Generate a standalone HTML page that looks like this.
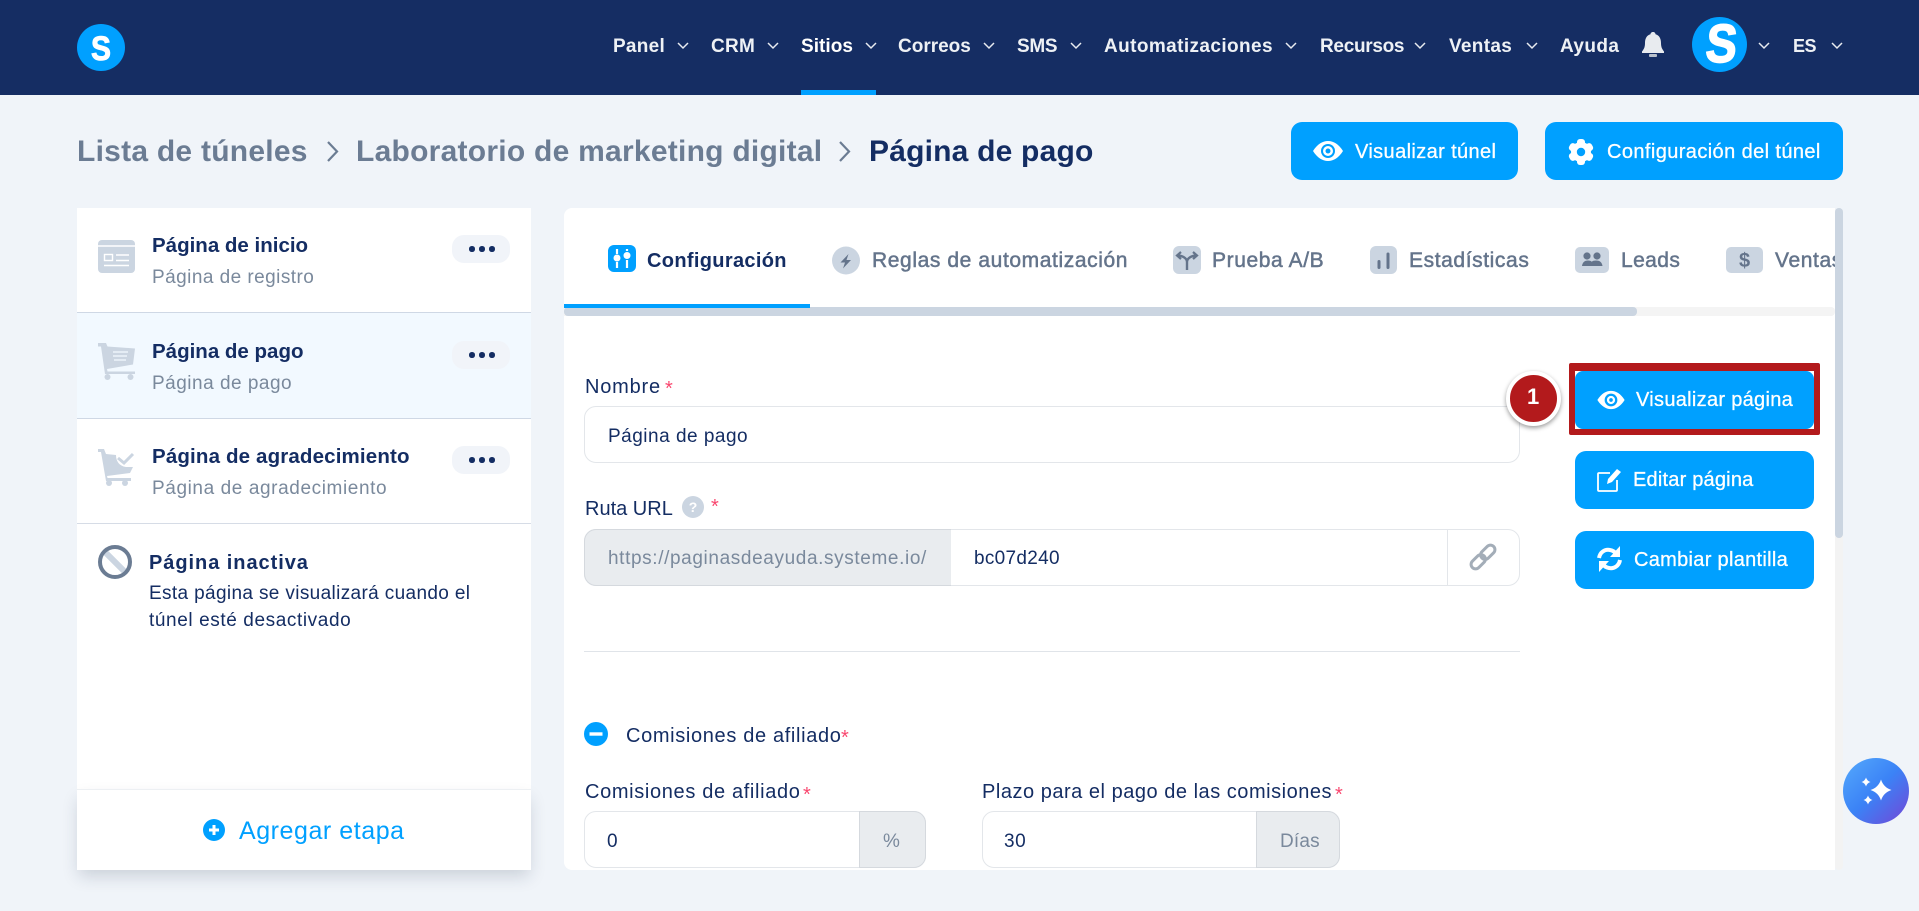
<!DOCTYPE html>
<html lang="es">
<head>
<meta charset="utf-8">
<title>Página de pago</title>
<style>
html,body{margin:0;padding:0}
body{position:relative;width:1919px;height:911px;overflow:hidden;background:#f0f4f9;font-family:"Liberation Sans",Arial,sans-serif;color:#142d63}
.a,.t,svg{position:absolute}
svg{display:block;overflow:visible}
.t{white-space:nowrap;line-height:0;font-size:19px;letter-spacing:.5px}
.b{font-weight:700}
.nav{font-size:19px;font-weight:700;letter-spacing:.3px;color:#eef1f5}
.crumb{font-size:30px;font-weight:700;color:#6b7c93}
.btn{position:absolute;background:#00a0ff;border-radius:11px}
.wt{color:#fff;font-size:20px;letter-spacing:.38px;-webkit-text-stroke:.3px #fff}
.tab{font-size:21px;letter-spacing:.6px;color:#64748b;-webkit-text-stroke:.5px #64748b}
.ttl{font-size:20.5px;font-weight:700;letter-spacing:0}
.sub{color:#7a899c}
.menu{position:absolute;left:452px;width:58px;height:28px;background:#f1f4f9;border-radius:12px}
.menu i{position:absolute;top:11px;width:5.5px;height:5.5px;border-radius:50%;background:#142d63}
.lab{font-size:20px;letter-spacing:.65px}
.req{color:#f9476f;font-size:20px;letter-spacing:0}
.inp{position:absolute;box-sizing:border-box;background:#fff;border:1px solid #e3e6ea;border-radius:12px}
.add{position:absolute;box-sizing:border-box;background:#e9ecef;border:1px solid #d5d9de}
</style>
</head>
<body>

<header class="a" style="left:0;top:0;width:1919px;height:95px;background:#152d63"></header>
<div class="a" style="left:801px;top:90px;width:75px;height:5px;background:#00a0ff"></div>

<div class="a" style="left:77px;top:24px;width:48px;height:47px;border-radius:50%;background:#00a0ff"></div>
<svg style="left:77px;top:24px" width="48" height="47"><text transform="translate(24 36) scale(.88 1)" text-anchor="middle" font-family="Liberation Sans" font-weight="700" font-size="34" fill="#fff" stroke="#fff" stroke-width="1">S</text></svg>

<span class="t nav" style="left:613px;top:47px;letter-spacing:.26px">Panel</span>
<span class="t nav" style="left:711px;top:47px">CRM</span>
<span class="t nav" style="left:801px;top:47px;color:#fff;letter-spacing:.05px">Sitios</span>
<span class="t nav" style="left:898px;top:47px;letter-spacing:0">Correos</span>
<span class="t nav" style="left:1017px;top:47px;letter-spacing:-.3px">SMS</span>
<span class="t nav" style="left:1104px;top:47px;letter-spacing:.4px">Automatizaciones</span>
<span class="t nav" style="left:1320px;top:47px;letter-spacing:-.3px">Recursos</span>
<span class="t nav" style="left:1449px;top:47px;letter-spacing:.3px">Ventas</span>
<span class="t nav" style="left:1560px;top:47px;letter-spacing:.4px">Ayuda</span>
<span class="t nav" style="left:1793px;top:46px;font-size:18px;letter-spacing:-.5px">ES</span>

<svg width="0" height="0" style="left:0;top:0"><defs>
<polyline id="ch" points="1,1 6,6 11,1" fill="none" stroke="#e8ebf0" stroke-width="1.5"/>
<path id="st" d="M0-1Q.24-.24 1 0Q.24 .24 0 1Q-.24 .24-1 0Q-.24-.24 0-1z" fill="#fff"/>
</defs></svg>
<svg style="left:677px;top:42px" width="12" height="8"><use href="#ch"/></svg>
<svg style="left:767px;top:42px" width="12" height="8"><use href="#ch"/></svg>
<svg style="left:865px;top:42px" width="12" height="8"><use href="#ch"/></svg>
<svg style="left:983px;top:42px" width="12" height="8"><use href="#ch"/></svg>
<svg style="left:1070px;top:42px" width="12" height="8"><use href="#ch"/></svg>
<svg style="left:1285px;top:42px" width="12" height="8"><use href="#ch"/></svg>
<svg style="left:1414px;top:42px" width="12" height="8"><use href="#ch"/></svg>
<svg style="left:1526px;top:42px" width="12" height="8"><use href="#ch"/></svg>
<svg style="left:1758px;top:42px" width="12" height="8"><use href="#ch"/></svg>
<svg style="left:1831px;top:42px" width="12" height="8"><use href="#ch"/></svg>

<svg style="left:1642px;top:32px" width="22" height="25" viewBox="0 0 22 25">
<path d="M11 0c1.500 0 2.500 1 2.500 2.300C17.500 3.300 19 7 19 11c0 4 1 6 3 8.500V21H0v-1.500c2-2.500 3-4.500 3-8.500 0-4 1.500-7.700 5.500-8.700C8.500 1 9.500 0 11 0z" fill="#e8ebef"/>
<rect x="7" y="22" width="8" height="3" rx="1" fill="#b9c0cb"/></svg>

<div class="a" style="left:1692px;top:17px;width:55px;height:55px;border-radius:50%;background:#00a0ff"></div>
<svg style="left:1692px;top:17px" width="55" height="55"><text transform="translate(28 45) scale(.86 1) skewX(-6)" text-anchor="middle" font-family="Liberation Sans" font-weight="700" font-size="54" fill="#fff" stroke="#fff" stroke-width="1.600">S</text></svg>

<span class="t crumb" style="left:77px;top:152px;letter-spacing:.25px">Lista de túneles</span>
<svg style="left:326px;top:140px" width="13" height="23"><polyline points="2,2 11,11.500 2,21" fill="none" stroke="#6b7c93" stroke-width="2.200"/></svg>
<span class="t crumb" style="left:356px;top:152px;letter-spacing:.25px">Laboratorio de marketing digital</span>
<svg style="left:838px;top:140px" width="13" height="23"><polyline points="2,2 11,11.500 2,21" fill="none" stroke="#6b7c93" stroke-width="2.200"/></svg>
<span class="t crumb" style="left:869px;top:152px;color:#142d63;letter-spacing:.2px">Página de pago</span>

<div class="btn" style="left:1291px;top:122px;width:227px;height:58px"></div>
<svg style="left:1313px;top:140px" width="30" height="22" viewBox="0 0 30 22"><path d="M0 11C4.500 4 9.500 1 15 1s10.500 3 15 10c-4.500 7-9.500 10-15 10S4.500 18 0 11z" fill="#fff"/><circle cx="15" cy="11" r="7" fill="#00a0ff"/><circle cx="15" cy="11" r="5" fill="#fff"/><circle cx="15" cy="11" r="2.500" fill="#00a0ff"/></svg>
<span class="t wt" style="left:1355px;top:152px">Visualizar túnel</span>

<div class="btn" style="left:1545px;top:122px;width:298px;height:58px"></div>
<svg style="left:1567px;top:139px" width="28" height="26" viewBox="-14 -13 28 26">
<g fill="#fff"><circle r="10"/><rect x="-4" y="-13" width="8" height="26" rx="3"/><rect x="-4" y="-13" width="8" height="26" rx="3" transform="rotate(60)"/><rect x="-4" y="-13" width="8" height="26" rx="3" transform="rotate(120)"/></g><circle r="4.200" fill="#00a0ff"/></svg>
<span class="t wt" style="left:1607px;top:152px;letter-spacing:.4px">Configuración del túnel</span>

<!-- Sidebar -->
<aside class="a" style="left:77px;top:208px;width:454px;height:662px;background:#fff"></aside>
<div class="a" style="left:77px;top:313px;width:454px;height:105px;background:#f2f9ff"></div>
<div class="a" style="left:77px;top:312px;width:454px;height:1px;background:#cfd8e5"></div>
<div class="a" style="left:77px;top:418px;width:454px;height:1px;background:#cfd8e5"></div>
<div class="a" style="left:77px;top:523px;width:454px;height:1px;background:#d6dce6"></div>

<svg style="left:98px;top:240px" width="37" height="33" viewBox="0 0 37 33"><rect width="37" height="33" rx="4" fill="#cbd5e1"/><path d="M0 6h37" stroke="#fff" stroke-width="1.400"/><rect x="6.500" y="14.500" width="8" height="6" fill="none" stroke="#fff" stroke-width="1.400"/><path d="M18 15h13M18 20.500h13M6 25.500h25" stroke="#fff" stroke-width="1.600"/></svg>
<span class="t ttl" style="left:152px;top:246px">Página de inicio</span>
<span class="t sub" style="left:152px;top:278px;letter-spacing:.45px">Página de registro</span>
<div class="menu" style="top:235px"><i style="left:17px"></i><i style="left:27px"></i><i style="left:37px"></i></div>

<svg style="left:98px;top:343px" width="37" height="37" viewBox="0 0 37 37"><path d="M0 0h8l1.500 3.500L37 5.500l-2 16-26 4.500.5 2.500H37V31H7L3 3.500H0z" fill="#cbd5e1"/><path d="M15 9h15M15 13h14M16 17h12" stroke="#f2f9ff" stroke-width="1.300"/><circle cx="9.500" cy="34" r="3" fill="#cbd5e1"/><circle cx="32.500" cy="34" r="3" fill="#cbd5e1"/></svg>
<span class="t ttl" style="left:152px;top:352px">Página de pago</span>
<span class="t sub" style="left:152px;top:384px">Página de pago</span>
<div class="menu" style="top:341px"><i style="left:17px"></i><i style="left:27px"></i><i style="left:37px"></i></div>

<svg style="left:98px;top:449px" width="36" height="37" viewBox="0 0 36 37"><path d="M0 0h6l2 5 10 1c0 6 3 11 10 12h7l-3 6-23 3 .5 2H33v3H8L3 3H0z" fill="#cbd5e1"/><path d="M20 9l6 5 9-9" fill="none" stroke="#cbd5e1" stroke-width="3"/><circle cx="11" cy="34" r="3" fill="#cbd5e1"/><circle cx="27" cy="34" r="3" fill="#cbd5e1"/></svg>
<span class="t ttl" style="left:152px;top:457px;letter-spacing:.15px">Página de agradecimiento</span>
<span class="t sub" style="left:152px;top:489px;letter-spacing:.6px">Página de agradecimiento</span>
<div class="menu" style="top:446px"><i style="left:17px"></i><i style="left:27px"></i><i style="left:37px"></i></div>

<svg style="left:98px;top:545px" width="34" height="34" viewBox="0 0 34 34"><path d="M7 7l20 20" stroke="#cbd5e1" stroke-width="6"/><circle cx="17" cy="17" r="15" fill="none" stroke="#6b7c93" stroke-width="4"/></svg>
<span class="t ttl" style="left:149px;top:563px;font-size:20px;letter-spacing:.95px">Página inactiva</span>
<span class="t" style="left:149px;top:594px;letter-spacing:.36px">Esta página se visualizará cuando el</span>
<span class="t" style="left:149px;top:621px;letter-spacing:.6px">túnel esté desactivado</span>

<div class="a" style="left:77px;top:789px;width:454px;height:81px;background:#fff;border-top:1px solid #edf0f3;box-sizing:border-box;box-shadow:0 8px 16px -2px rgba(30,45,70,.18)"></div>
<svg style="left:203px;top:819px" width="22" height="22"><circle cx="11" cy="11" r="11" fill="#00a0ff"/><path d="M11 6v10M6 11h10" stroke="#fff" stroke-width="3"/></svg>
<span class="t" style="left:239px;top:831px;font-size:25px;letter-spacing:.55px;color:#00a0ff">Agregar etapa</span>

<!-- Main panel -->
<main class="a" style="left:564px;top:208px;width:1271px;height:662px;background:#fff;border-radius:8px 0 0 8px"></main>
<div class="a" style="left:1835px;top:208px;width:8px;height:662px;background:#f3f3f3;border-radius:4px"></div>
<div class="a" style="left:1835px;top:208px;width:8px;height:330px;background:#cbd5e1;border-radius:4px"></div>

<div class="a" style="left:0;top:0;width:1835px;height:911px;overflow:hidden">
<svg style="left:608px;top:245px" width="28" height="27" viewBox="0 0 28 27"><rect width="28" height="27" rx="6" fill="#00a0ff"/><path d="M9 4v5M9 17v6M19 4v2M19 15v8" stroke="#fff" stroke-width="2.200"/><circle cx="9" cy="13" r="3.500" fill="#fff"/><circle cx="19" cy="10.500" r="3.500" fill="#fff"/></svg>
<span class="t b" style="left:647px;top:261px;font-size:20px;letter-spacing:.33px">Configuración</span>

<svg style="left:832px;top:246px" width="28" height="29" viewBox="0 0 28 29"><circle cx="14" cy="14.500" r="14" fill="#cbd5e1"/><path d="M16.500 8l-8 8.500h4.500l-2 6 8-8.500h-4.500z" fill="#64748b"/></svg>
<span class="t tab" style="left:872px;top:261px">Reglas de automatización</span>

<svg style="left:1173px;top:246px" width="28" height="28" viewBox="0 0 28 28"><rect width="28" height="28" rx="6" fill="#cbd5e1"/><path d="M14 24v-8c0-3-3-6-9-6.500M14 16c0-3 3-6 9-6.500" fill="none" stroke="#64748b" stroke-width="2.400"/><path d="M8 6L4 9.500l4 3.500M20 6l4 3.500-4 3.500" fill="none" stroke="#64748b" stroke-width="2.200"/></svg>
<span class="t tab" style="left:1212px;top:261px;letter-spacing:.6px">Prueba A/B</span>

<svg style="left:1370px;top:246px" width="27" height="28" viewBox="0 0 27 28"><rect width="27" height="28" rx="6" fill="#cbd5e1"/><path d="M9 15.500v6M18 8v13.500" stroke="#64748b" stroke-width="3" stroke-linecap="round"/></svg>
<span class="t tab" style="left:1409px;top:261px;letter-spacing:.6px">Estadísticas</span>

<svg style="left:1575px;top:247px" width="34" height="26" viewBox="0 0 34 26"><rect width="34" height="26" rx="5" fill="#cbd5e1"/><circle cx="12" cy="9" r="3.600" fill="#64748b"/><circle cx="22" cy="9" r="3.600" fill="#64748b"/><path d="M7 19c.5-4 3-5.500 6-5.500 1.500 0 2.800.4 3.800 1.200C17.800 13.900 19 13.500 21 13.500c3.500 0 6 1.500 6.500 5.500z" fill="#64748b"/></svg>
<span class="t tab" style="left:1621px;top:261px;letter-spacing:.4px">Leads</span>

<svg style="left:1726px;top:247px" width="37" height="26" viewBox="0 0 37 26"><rect width="37" height="26" rx="5" fill="#cbd5e1"/><text x="18.500" y="20" text-anchor="middle" font-family="Liberation Sans" font-size="20" font-weight="700" fill="#64748b">$</text></svg>
<span class="t tab" style="left:1775px;top:261px">Ventas</span>
</div>

<div class="a" style="left:564px;top:307px;width:1271px;height:9px;background:#f4f4f4;border-radius:0 4px 4px 0"></div>
<div class="a" style="left:564px;top:307px;width:1073px;height:9px;background:#cbd5e1;border-radius:4px"></div>
<div class="a" style="left:564px;top:304px;width:246px;height:4px;background:#00a0ff"></div>

<!-- Form -->
<span class="t lab" style="left:585px;top:387px;letter-spacing:.8px">Nombre</span>
<span class="t req" style="left:665px;top:389px">*</span>
<div class="inp" style="left:584px;top:406px;width:936px;height:57px"></div>
<span class="t" style="left:608px;top:437px">Página de pago</span>

<span class="t lab" style="left:585px;top:509px;letter-spacing:0">Ruta URL</span>
<svg style="left:682px;top:496px" width="22" height="22"><circle cx="11" cy="11" r="11" fill="#cbd5e1"/><text x="11" y="16" text-anchor="middle" font-family="Liberation Sans" font-weight="700" font-size="14" fill="#fff">?</text></svg>
<span class="t req" style="left:711px;top:507px">*</span>
<div class="inp" style="left:584px;top:529px;width:936px;height:57px"></div>
<div class="add" style="left:584px;top:529px;width:367px;height:57px;border-radius:12px 0 0 12px;border-right:0"></div>
<div class="a" style="left:1447px;top:530px;width:1px;height:55px;background:#e3e6ea"></div>
<span class="t sub" style="left:608px;top:559px;letter-spacing:.62px">https://paginasdeayuda.systeme.io/</span>
<span class="t" style="left:974px;top:559px;letter-spacing:.3px">bc07d240</span>
<svg style="left:1469px;top:543px" width="28" height="28" viewBox="0 0 28 28"><g fill="none" stroke="#a3adb8" stroke-width="3" transform="rotate(-45 14 14)"><rect x="-1" y="9.500" width="16.500" height="9" rx="4.500"/><rect x="12.500" y="9.500" width="16.500" height="9" rx="4.500"/></g></svg>

<div class="a" style="left:584px;top:651px;width:936px;height:1px;background:#e0e4e9"></div>

<svg style="left:584px;top:722px" width="24" height="24"><circle cx="12" cy="12" r="12" fill="#00a0ff"/><rect x="5.500" y="10.300" width="13" height="3.400" fill="#fff"/></svg>
<span class="t lab" style="left:626px;top:736px">Comisiones de afiliado</span>
<span class="t req" style="left:841px;top:738px">*</span>

<span class="t lab" style="left:585px;top:792px">Comisiones de afiliado</span>
<span class="t req" style="left:803px;top:795px">*</span>
<div class="inp" style="left:584px;top:811px;width:342px;height:57px"></div>
<div class="add" style="left:859px;top:811px;width:67px;height:57px;border-radius:0 12px 12px 0"></div>
<span class="t" style="left:607px;top:842px">0</span>
<span class="t sub" style="left:883px;top:842px;letter-spacing:0">%</span>

<span class="t lab" style="left:982px;top:792px;letter-spacing:.52px">Plazo para el pago de las comisiones</span>
<span class="t req" style="left:1335px;top:795px">*</span>
<div class="inp" style="left:982px;top:811px;width:358px;height:57px"></div>
<div class="add" style="left:1256px;top:811px;width:84px;height:57px;border-radius:0 12px 12px 0"></div>
<span class="t" style="left:1004px;top:842px">30</span>
<span class="t sub" style="left:1280px;top:842px;letter-spacing:.2px">Días</span>

<!-- Right-side actions -->
<div class="a" style="left:1569px;top:363px;width:251px;height:72px;box-sizing:border-box;background:#fff;border:solid #b31a1c;border-width:8px 6px 6px 6px;border-radius:2px"></div>
<div class="btn" style="left:1575px;top:371px;width:239px;height:58px;border-radius:8px"></div>
<svg style="left:1597px;top:390px" width="28" height="20" viewBox="0 0 30 22"><path d="M0 11C4.500 4 9.500 1 15 1s10.500 3 15 10c-4.500 7-9.500 10-15 10S4.500 18 0 11z" fill="#fff"/><circle cx="15" cy="11" r="7" fill="#00a0ff"/><circle cx="15" cy="11" r="4.500" fill="#fff"/><circle cx="15" cy="11" r="2" fill="#00a0ff"/></svg>
<span class="t wt" style="left:1636px;top:400px;letter-spacing:.3px">Visualizar página</span>

<div class="a" style="left:1506px;top:371px;width:55px;height:55px;box-sizing:border-box;border-radius:50%;background:#b31a1c;border:4px solid #fff;box-shadow:0 2px 5px rgba(0,0,0,.4)"></div>
<span class="t b" style="left:1527px;top:397px;font-size:22px;letter-spacing:0;color:#fff">1</span>

<div class="btn" style="left:1575px;top:451px;width:239px;height:58px"></div>
<svg style="left:1597px;top:468px" width="25" height="24" viewBox="0 0 25 24"><path d="M13 5H2a1 1 0 0 0-1 1v16a1 1 0 0 0 1 1h17a1 1 0 0 0 1-1V12" fill="none" stroke="#fff" stroke-width="1.800"/><path d="M10 16l1-5L20 1l4 3-9 10z" fill="#fff"/></svg>
<span class="t wt" style="left:1633px;top:480px;letter-spacing:.2px">Editar página</span>

<div class="btn" style="left:1575px;top:531px;width:239px;height:58px"></div>
<svg style="left:1597px;top:546px" width="25" height="26" viewBox="0 0 25 26"><path d="M2 12C3 6 8 3 13 4c3 .5 5 2 6.500 4" fill="none" stroke="#fff" stroke-width="4"/><path d="M23 0v11H13z" fill="#fff"/><path d="M23 14c-1 6-6 9-11 8-3-.5-5-2-6.500-4" fill="none" stroke="#fff" stroke-width="4"/><path d="M2 26V15h10z" fill="#fff"/></svg>
<span class="t wt" style="left:1634px;top:560px;letter-spacing:.3px">Cambiar plantilla</span>

<!-- AI button -->
<div class="a" style="left:1843px;top:758px;width:66px;height:66px;border-radius:50%;background:linear-gradient(135deg,#55aafc 0%,#3b82f6 50%,#7445d6 100%)"></div>
<svg style="left:1843px;top:758px" width="66" height="66">
<use href="#st" transform="translate(38 32) scale(10.500)"/>
<use href="#st" transform="translate(23 24) scale(4.500)"/>
<use href="#st" transform="translate(25 42) scale(4.500)"/>
</svg>
</body>
</html>
